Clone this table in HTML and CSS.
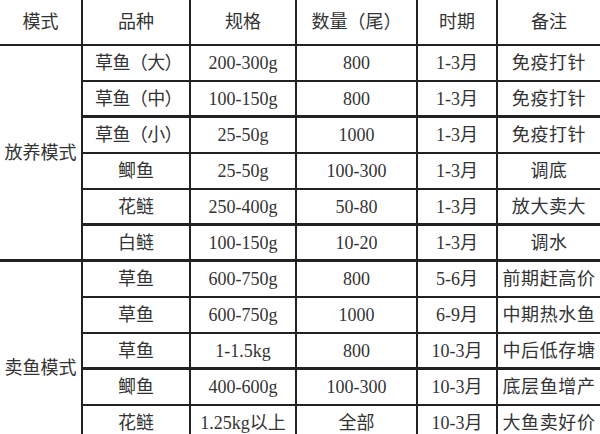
FILE: index.html
```html
<!DOCTYPE html>
<html lang="zh-CN">
<head>
<meta charset="utf-8">
<title>养鱼模式</title>
<link rel="stylesheet" href="styles.css">
</head>
<body>
<table class="grid">
  <colgroup>
    <col class="c-mode"><col class="c-kind"><col class="c-spec"><col class="c-qty"><col class="c-time"><col class="c-note">
  </colgroup>
  <thead>
    <tr class="head">
      <th>模式</th><th>品种</th><th>规格</th><th>数量（尾）</th><th>时期</th><th>备注</th>
    </tr>
  </thead>
  <tbody>
    <tr>
      <td class="mode" rowspan="6">放养模式</td>
      <td class="kind-left">草鱼（大）</td><td>200-300g</td><td>800</td><td>1-3月</td><td class="note">免疫打针</td>
    </tr>
    <tr class="thick">
      <td class="kind-left">草鱼（中）</td><td>100-150g</td><td>800</td><td>1-3月</td><td class="note">免疫打针</td>
    </tr>
    <tr>
      <td class="kind-left">草鱼（小）</td><td>25-50g</td><td>1000</td><td>1-3月</td><td class="note">免疫打针</td>
    </tr>
    <tr>
      <td class="kind">鲫鱼</td><td>25-50g</td><td>100-300</td><td>1-3月</td><td class="note">调底</td>
    </tr>
    <tr class="thick">
      <td class="kind">花鲢</td><td>250-400g</td><td>50-80</td><td>1-3月</td><td class="note">放大卖大</td>
    </tr>
    <tr class="thick">
      <td class="kind">白鲢</td><td>100-150g</td><td>10-20</td><td>1-3月</td><td class="note">调水</td>
    </tr>
    <tr>
      <td class="mode mode-low" rowspan="5">卖鱼模式</td>
      <td class="kind">草鱼</td><td>600-750g</td><td>800</td><td>5-6月</td><td class="note">前期赶高价</td>
    </tr>
    <tr>
      <td class="kind">草鱼</td><td>600-750g</td><td>1000</td><td>6-9月</td><td class="note">中期热水鱼</td>
    </tr>
    <tr class="thick">
      <td class="kind">草鱼</td><td>1-1.5kg</td><td>800</td><td>10-3月</td><td class="note">中后低存塘</td>
    </tr>
    <tr>
      <td class="kind">鲫鱼</td><td>400-600g</td><td>100-300</td><td>10-3月</td><td class="note">底层鱼增产</td>
    </tr>
    <tr>
      <td class="kind">花鲢</td><td>1.25kg以上</td><td>全部</td><td>10-3月</td><td class="note">大鱼卖好价</td>
    </tr>
  </tbody>
</table>
</body>
</html>
```
FILE: styles.css
```css
html, body {
  margin: 0;
  padding: 0;
  background: #ffffff;
  overflow: hidden;
}

body {
  width: 600px;
  height: 434px;
}

.grid {
  border-collapse: separate;
  border-spacing: 0;
  table-layout: fixed;
  width: 602px;
  font-family: "Liberation Serif", "Noto Sans CJK SC", serif;
  font-size: 18px;
  color: #333333;
}

.c-mode { width: 83px; }
.c-kind { width: 108px; }
.c-spec { width: 106px; }
.c-qty { width: 121px; }
.c-time { width: 80px; }
.c-note { width: 104px; }

.grid th,
.grid td {
  box-sizing: border-box;
  padding: 0;
  text-align: center;
  vertical-align: middle;
  font-weight: 400;
  border-right: 2px solid #222222;
  border-bottom: 2px solid #222222;
  white-space: nowrap;
  overflow: hidden;
  line-height: 20px;
}

.head th {
  height: 46px;
}

.grid tbody tr {
  height: 36px;
}

.grid tbody td {
  height: 36px;
}

.grid tr.thick td {
  border-bottom-width: 3px;
}

.grid .mode {
  text-align: center;
  letter-spacing: 0;
  border-bottom-width: 3px;
}

.grid .mode-low {
  padding-top: 32px;
  border-bottom-width: 0;
}

.kind-left {
  text-align: left;
  padding-left: 5px !important;
  letter-spacing: -0.6px;
}

.note {
  letter-spacing: 0.6px;
}
```
